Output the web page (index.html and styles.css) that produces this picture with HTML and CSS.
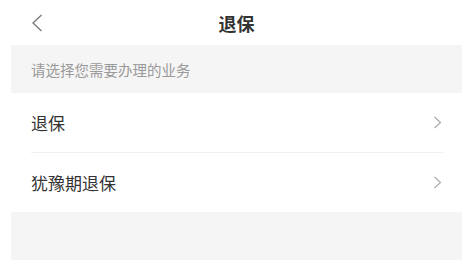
FILE: index.html
```html
<!DOCTYPE html>
<html lang="zh">
<head>
<meta charset="utf-8">
<link rel="stylesheet" href="styles.css">
</head>
<body>
<div class="page">
  <header class="nav">
    <span class="back">
      <svg width="12" height="18" viewBox="0 0 12 18"><path d="M10.5 1 L2 9 L10.5 17" fill="none" stroke="#777" stroke-width="1.3"/></svg>
    </span>
    <h1 class="title">退保</h1>
  </header>
  <div class="hint">请选择您需要办理的业务</div>
  <ul class="list">
    <li class="row first"><span>退保</span><svg class="chev" width="9" height="13" viewBox="0 0 9 13"><path d="M1.5 1 L7.5 6.5 L1.5 12" fill="none" stroke="#aaa" stroke-width="1.2"/></svg></li>
    <li class="row"><span>犹豫期退保</span><svg class="chev" width="9" height="13" viewBox="0 0 9 13"><path d="M1.5 1 L7.5 6.5 L1.5 12" fill="none" stroke="#aaa" stroke-width="1.2"/></svg></li>
  </ul>
  <div class="rest"></div>
</div>
</body>
</html>
```
FILE: styles.css
```css
html, body { margin: 0; padding: 0; background: #fff; }
body { font-family: "Noto Sans CJK SC", "Noto Sans", sans-serif; color: #333; }
.page { width: 471px; height: 260px; padding: 0 9px 0 11px; box-sizing: border-box; display: flex; flex-direction: column; overflow: hidden; }
.nav { height: 45px; position: relative; display: flex; align-items: center; justify-content: center; }
.back { position: absolute; left: 20px; top: 14px; display: block; line-height: 0; }
.title { margin: 0; font-size: 18px; font-weight: 700; color: #333; line-height: 1; }
.hint { height: 48px; background: #f5f5f5; display: flex; align-items: center; padding-left: 20px; font-size: 14.5px; color: #9a9a9a; }
.list { list-style: none; margin: 0; padding: 0 19px 0 20px; background: #fff; }
.row { height: 59px; display: flex; align-items: center; justify-content: space-between; font-size: 17px; color: #333; }
.row.first { border-bottom: 1px solid #f0f0f0; }
.chev { margin-right: 1px; }
.rest { flex: 1; background: #f5f5f5; }
```
